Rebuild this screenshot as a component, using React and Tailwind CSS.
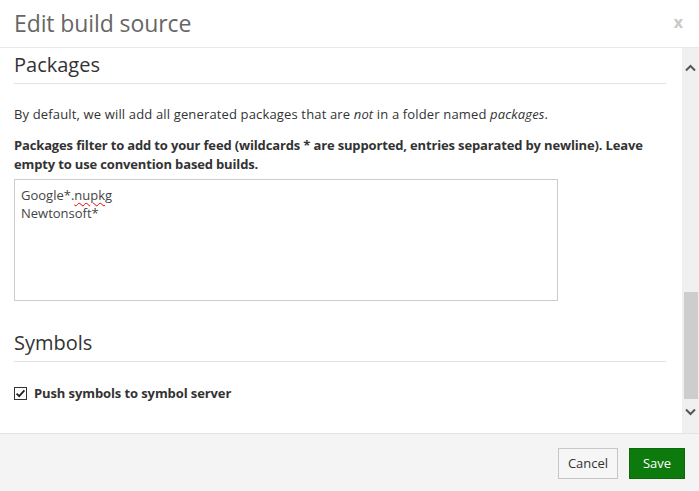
export default function App() {
  const font = { fontFamily: '"Open Sans", "Noto Sans", sans-serif' };
  return (
    <div className="w-[699px] h-[491px] bg-white flex flex-col overflow-hidden text-[#333]" style={font}>
      <div className="h-[48px] border-b border-[#e9e9e9] flex items-center justify-between pl-[14px] pr-[16px] shrink-0">
        <div className="text-[23px] leading-[30px] text-[#666] mt-[-1px] tracking-[-0.1px]">Edit build source</div>
        <div className="text-[16px] font-bold text-[#c8c8c8] leading-none mt-[-3px]">x</div>
      </div>
      <div className="flex flex-1 min-h-0">
        <div className="flex-1 pl-[14px] pr-[16px]">
          <div className="pt-[3px] pb-[4px] border-b border-[#e2e2e2]">
            <div className="text-[20px] leading-[28px]">Packages</div>
          </div>
          <p className="mt-[21px] text-[13px] leading-[19px] tracking-[0.15px]">
            By default, we will add all generated packages that are <i>not</i> in a folder named <i>packages</i>.
          </p>
          <p className="mt-[12px] text-[13px] leading-[19px] font-bold tracking-[-0.15px]">
            Packages filter to add to your feed (wildcards * are supported, entries separated by newline). Leave empty to use convention based builds.
          </p>
          <div className="mt-[5px] w-[544px] h-[122px] border border-[#cccccc] px-[6px] pt-[6px] text-[13px] leading-[18px] text-[#444]">
            <div>
              Google*.<span className="underline decoration-wavy decoration-[#e00] decoration-1 underline-offset-2">nupkg</span>
            </div>
            <div>Newtonsoft*</div>
          </div>
          <div className="mt-[28px] pb-[4px] border-b border-[#e2e2e2]">
            <div className="text-[20px] leading-[28px]">Symbols</div>
          </div>
          <div className="mt-[22px] flex items-center gap-[7px] h-[19px]">
            <svg width="13" height="13" viewBox="0 0 13 13">
              <rect x="0.5" y="0.5" width="12" height="12" fill="white" stroke="#333" />
              <path d="M2.6 6.6 L5.2 9.2 L10.4 3.4" fill="none" stroke="#222" strokeWidth="1.8" />
            </svg>
            <span className="text-[13px] font-bold leading-[19px] tracking-[-0.1px]">Push symbols to symbol server</span>
          </div>
        </div>
        <div className="w-[17px] bg-[#f0f0f0] flex flex-col items-center shrink-0">
          <div className="h-[40px] flex items-center justify-center">
            <svg width="11" height="8" viewBox="0 0 11 8"><path d="M1 6.5 L5.5 2 L10 6.5" fill="none" stroke="#555" strokeWidth="2" /></svg>
          </div>
          <div className="flex-1" />
          <div className="w-[14px] h-[107px] bg-[#cdcdcd]" />
          <div className="h-[26px] flex items-center justify-center">
            <svg width="11" height="8" viewBox="0 0 11 8"><path d="M1 1.5 L5.5 6 L10 1.5" fill="none" stroke="#555" strokeWidth="2" /></svg>
          </div>
          <div className="h-[8px]" />
        </div>
      </div>
      <div className="h-[58px] border-t border-[#e2e2e2] bg-[#f4f4f4] flex items-center justify-end gap-[11px] pr-[14px] pt-[2px] shrink-0">
        <button className="h-[31px] w-[60px] border border-[#c6c6c6] bg-[#f6f6f6] text-[13px] text-[#333]">Cancel</button>
        <button className="h-[31px] w-[56px] border border-[#0b6b0b] bg-[#0c7a0c] text-[13px] text-white">Save</button>
      </div>
    </div>
  );
}
